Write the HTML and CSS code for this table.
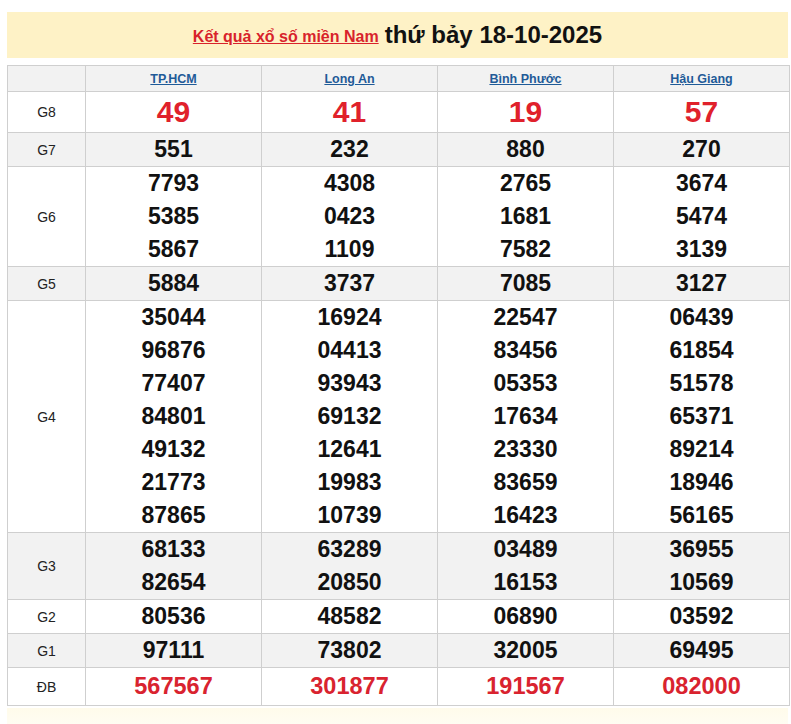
FILE: index.html
```html
<!DOCTYPE html>
<html lang="vi">
<head>
<meta charset="utf-8">
<title>Kết quả xổ số miền Nam</title>
<link rel="stylesheet" href="styles.css">
</head>
<body>
<div class="page">
  <div class="title">
    <a href="#" class="title-link">Kết quả xổ số miền Nam</a>
    <span class="title-date">thứ bảy 18-10-2025</span>
  </div>
  <table class="results">
    <colgroup>
      <col class="c-label"><col class="c-prov"><col class="c-prov"><col class="c-prov"><col class="c-prov">
    </colgroup>
    <thead>
      <tr class="gray head">
        <th></th>
        <th><a href="#">TP.HCM</a></th>
        <th><a href="#">Long An</a></th>
        <th><a href="#">Bình Phước</a></th>
        <th><a href="#">Hậu Giang</a></th>
      </tr>
    </thead>
    <tbody>
      <tr class="g8">
        <td class="lbl">G8</td>
        <td><div class="n">49</div></td>
        <td><div class="n">41</div></td>
        <td><div class="n">19</div></td>
        <td><div class="n">57</div></td>
      </tr>
      <tr class="gray">
        <td class="lbl">G7</td>
        <td><div class="n">551</div></td>
        <td><div class="n">232</div></td>
        <td><div class="n">880</div></td>
        <td><div class="n">270</div></td>
      </tr>
      <tr>
        <td class="lbl">G6</td>
        <td><div class="n">7793</div><div class="n">5385</div><div class="n">5867</div></td>
        <td><div class="n">4308</div><div class="n">0423</div><div class="n">1109</div></td>
        <td><div class="n">2765</div><div class="n">1681</div><div class="n">7582</div></td>
        <td><div class="n">3674</div><div class="n">5474</div><div class="n">3139</div></td>
      </tr>
      <tr class="gray">
        <td class="lbl">G5</td>
        <td><div class="n">5884</div></td>
        <td><div class="n">3737</div></td>
        <td><div class="n">7085</div></td>
        <td><div class="n">3127</div></td>
      </tr>
      <tr>
        <td class="lbl">G4</td>
        <td><div class="n">35044</div><div class="n">96876</div><div class="n">77407</div><div class="n">84801</div><div class="n">49132</div><div class="n">21773</div><div class="n">87865</div></td>
        <td><div class="n">16924</div><div class="n">04413</div><div class="n">93943</div><div class="n">69132</div><div class="n">12641</div><div class="n">19983</div><div class="n">10739</div></td>
        <td><div class="n">22547</div><div class="n">83456</div><div class="n">05353</div><div class="n">17634</div><div class="n">23330</div><div class="n">83659</div><div class="n">16423</div></td>
        <td><div class="n">06439</div><div class="n">61854</div><div class="n">51578</div><div class="n">65371</div><div class="n">89214</div><div class="n">18946</div><div class="n">56165</div></td>
      </tr>
      <tr class="gray">
        <td class="lbl">G3</td>
        <td><div class="n">68133</div><div class="n">82654</div></td>
        <td><div class="n">63289</div><div class="n">20850</div></td>
        <td><div class="n">03489</div><div class="n">16153</div></td>
        <td><div class="n">36955</div><div class="n">10569</div></td>
      </tr>
      <tr>
        <td class="lbl">G2</td>
        <td><div class="n">80536</div></td>
        <td><div class="n">48582</div></td>
        <td><div class="n">06890</div></td>
        <td><div class="n">03592</div></td>
      </tr>
      <tr class="gray">
        <td class="lbl">G1</td>
        <td><div class="n">97111</div></td>
        <td><div class="n">73802</div></td>
        <td><div class="n">32005</div></td>
        <td><div class="n">69495</div></td>
      </tr>
      <tr class="db">
        <td class="lbl">ĐB</td>
        <td><div class="n">567567</div></td>
        <td><div class="n">301877</div></td>
        <td><div class="n">191567</div></td>
        <td><div class="n">082000</div></td>
      </tr>
    </tbody>
  </table>
  <div class="footer-strip"></div>
</div>
</body>
</html>
```

FILE: styles.css
```css
* { box-sizing: border-box; }
html, body { margin: 0; padding: 0; background: #fff; }
body { font-family: "Liberation Sans", Arial, sans-serif; color: #111; }

.page {
  width: 791px;
  padding: 12px 3px 0 7px;
}

.title {
  height: 46px;
  background: #fef2c6;
  display: flex;
  align-items: center;
  justify-content: center;
  gap: 6px;
  margin-bottom: 7px;
}
.title-link {
  color: #d8232b;
  font-weight: bold;
  font-size: 16px;
  text-decoration: underline;
  position: relative;
  top: 2px;
}
.title-date {
  color: #111;
  font-weight: bold;
  font-size: 24px;
}

.results {
  width: 781px;
  border-collapse: collapse;
  table-layout: fixed;
}
.c-label { width: 78px; }
.c-prov { width: 176px; }

.results th, .results td {
  border: 1px solid #cfcfcf;
  padding: 0;
  text-align: center;
  vertical-align: middle;
}
.results tr.gray { background: #f2f2f2; }

.head th {
  height: 26px;
  line-height: 24px;
  font-size: 12.5px;
  font-weight: bold;
}
.head a { color: #1f5b98; text-decoration: underline; }

.lbl {
  font-size: 14px;
  color: #222;
}

.n {
  font-size: 23px;
  font-weight: bold;
  line-height: 33px;
  color: #111;
}
.g8 .n {
  font-size: 30px;
  line-height: 40px;
  color: #e0212b;
}
.db .n {
  font-size: 23.5px;
  line-height: 37px;
  color: #d9232f;
}

.footer-strip {
  height: 19px;
  background: linear-gradient(#fffbea, #fffdf4);
  margin-top: 2px;
}
```
